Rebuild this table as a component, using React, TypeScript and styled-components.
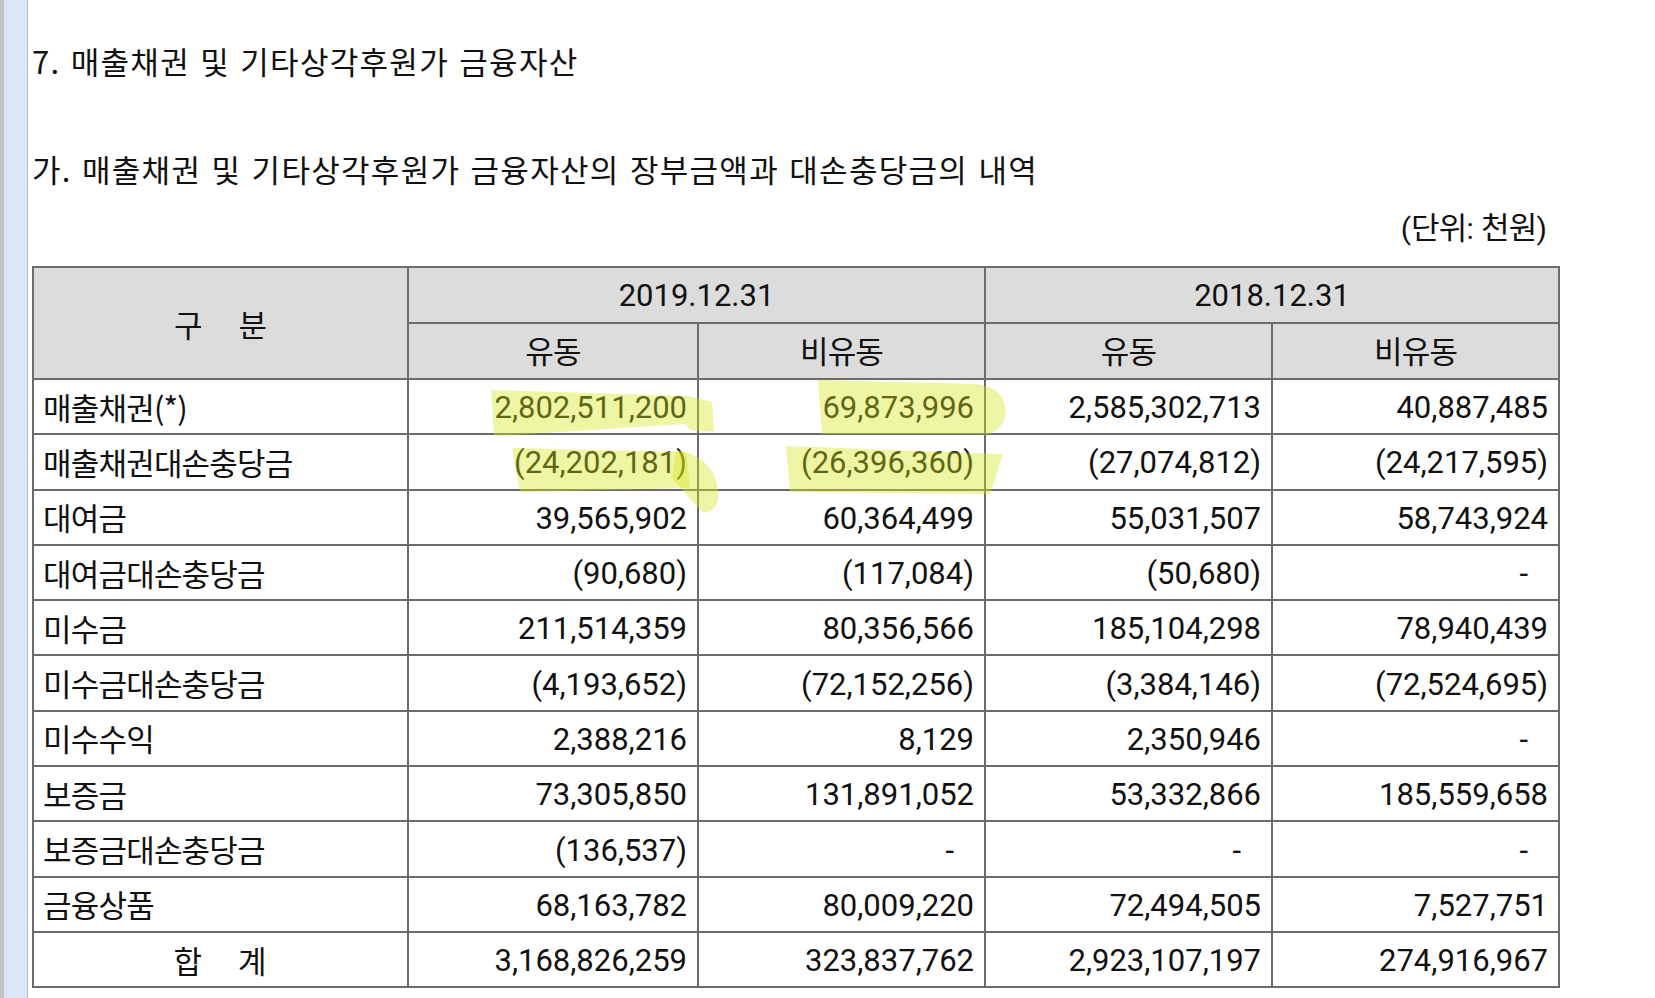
import React from "react";
import styled, { createGlobalStyle } from "styled-components";

const GlobalStyle = createGlobalStyle`
  html, body { margin: 0; padding: 0; background: #ffffff; }
  body { font-family: Roboto, "Noto Sans CJK KR", sans-serif; color: #111; }
`;

const Page = styled.div`
  position: relative;
  display: flex;
  width: 1655px;
  height: 998px;
  overflow: hidden;
  background: #fff;
`;

const Gutter = styled.div`
  flex: 0 0 auto;
  width: 23px;
  border-left: 4px solid #c3c3c3;
  border-right: 1px solid #a9bedb;
  background: #dce7f6;
`;

const Content = styled.main`
  flex: 1 1 auto;
  padding-left: 4px;
  display: flex;
  flex-direction: column;
  align-items: flex-start;
`;

const Title = styled.h1`
  margin: 41px 0 0;
  font-family: "Noto Sans CJK KR", sans-serif;
  font-weight: 400;
  font-size: 31px;
  line-height: 40px;
  letter-spacing: 1.3px;
  word-spacing: 2px;
  color: #111;
`;

const SubTitle = styled(Title).attrs({ as: "h2" })`
  margin-top: 68px;
`;

const Unit = styled.div`
  width: 1515px;
  padding-right: 11px;
  margin-top: 17px;
  text-align: right;
  font-family: Roboto, "Noto Sans CJK KR", sans-serif;
  font-size: 30px;
  line-height: 40px;
`;

const Table = styled.table`
  margin-top: 17px;
  width: 1526px;
  table-layout: fixed;
  border-collapse: collapse;
  border: 2px solid #151515;
`;

const Col = styled.col<{ $w: number }>`
  width: ${(p) => p.$w}px;
`;

const HeadRow = styled.tr`
  height: 56px;
`;

const BodyRow = styled.tr`
  height: 55.3px;
`;

const Th = styled.th<{ $sub?: boolean }>`
  background: #dcdcdc;
  border: 2px solid #6c6c6c;
  font-family: Roboto, "Noto Sans CJK KR", sans-serif;
  font-weight: 400;
  font-size: 30px;
  color: #111;
  text-align: center;
  vertical-align: middle;
  padding: 0 0 ${(p) => (p.$sub ? "3px" : "0")};
`;

const KoText = styled.span`
  font-family: "Noto Sans CJK KR", sans-serif;
  font-size: 31px;
  letter-spacing: -0.8px;
`;

const Spaced = styled.span`
  font-family: "Noto Sans CJK KR", sans-serif;
  font-size: 31px;
  letter-spacing: 36px;
  margin-right: -36px;
`;

const NumText = styled.span`
  font-family: Roboto, sans-serif;
  font-size: 31px;
`;

const Td = styled.td<{ $dash?: boolean; $align?: "left" | "right" | "center" }>`
  border: 2px solid #6c6c6c;
  padding: 3px ${(p) => (p.$dash ? "30px" : "10px")} 0 10px;
  text-align: ${(p) => p.$align || "right"};
  vertical-align: middle;
  font-size: 30px;
  line-height: 36px;
  color: #111;
  white-space: nowrap;
  overflow: hidden;
`;

const LabelTd = styled(Td)`
  padding-left: 9px;
`;

const Highlight = styled.svg`
  position: absolute;
  left: 0;
  top: 0;
  width: 1655px;
  height: 998px;
  pointer-events: none;
`;

const rows: string[][] = [
  ["매출채권(*)", "2,802,511,200", "69,873,996", "2,585,302,713", "40,887,485"],
  ["매출채권대손충당금", "(24,202,181)", "(26,396,360)", "(27,074,812)", "(24,217,595)"],
  ["대여금", "39,565,902", "60,364,499", "55,031,507", "58,743,924"],
  ["대여금대손충당금", "(90,680)", "(117,084)", "(50,680)", "-"],
  ["미수금", "211,514,359", "80,356,566", "185,104,298", "78,940,439"],
  ["미수금대손충당금", "(4,193,652)", "(72,152,256)", "(3,384,146)", "(72,524,695)"],
  ["미수수익", "2,388,216", "8,129", "2,350,946", "-"],
  ["보증금", "73,305,850", "131,891,052", "53,332,866", "185,559,658"],
  ["보증금대손충당금", "(136,537)", "-", "-", "-"],
  ["금융상품", "68,163,782", "80,009,220", "72,494,505", "7,527,751"],
];

const total = ["3,168,826,259", "323,837,762", "2,923,107,197", "274,916,967"];

const widths = [375, 290, 287, 287, 287];

export default function App() {
  return (
    <>
      <GlobalStyle />
      <Page>
        <Gutter />
        <Content>
          <Title>7. 매출채권 및 기타상각후원가 금융자산</Title>
          <SubTitle>가. 매출채권 및 기타상각후원가 금융자산의 장부금액과 대손충당금의 내역</SubTitle>
          <Unit>
            (<KoText>단위</KoText>: <KoText>천원</KoText>)
          </Unit>
          <Table>
            <colgroup>
              {widths.map((w, i) => (
                <Col key={i} $w={w} />
              ))}
            </colgroup>
            <thead>
              <HeadRow>
                <Th rowSpan={2}>
                  <Spaced>구분</Spaced>
                </Th>
                <Th colSpan={2}>
                  <NumText>2019.12.31</NumText>
                </Th>
                <Th colSpan={2}>
                  <NumText>2018.12.31</NumText>
                </Th>
              </HeadRow>
              <HeadRow>
                <Th $sub><KoText>유동</KoText></Th>
                <Th $sub><KoText>비유동</KoText></Th>
                <Th $sub><KoText>유동</KoText></Th>
                <Th $sub><KoText>비유동</KoText></Th>
              </HeadRow>
            </thead>
            <tbody>
              {rows.map((r) => (
                <BodyRow key={r[0]}>
                  <LabelTd $align="left">
                    <KoText>{r[0]}</KoText>
                  </LabelTd>
                  {r.slice(1).map((v, i) => (
                    <Td key={i} $dash={v === "-"}>
                      <NumText>{v}</NumText>
                    </Td>
                  ))}
                </BodyRow>
              ))}
              <BodyRow>
                <LabelTd $align="center">
                  <Spaced>합계</Spaced>
                </LabelTd>
                {total.map((v, i) => (
                  <Td key={i}>
                    <NumText>{v}</NumText>
                  </Td>
                ))}
              </BodyRow>
            </tbody>
          </Table>
        </Content>
        <Highlight viewBox="0 0 1655 998">
          <g fill="rgb(212,230,28)" fillOpacity="0.4" stroke="none">
            <path d="M491 390 L688 396 L712 402 L714 432 L690 430 L686 424 L494 436 Z" />
            <path d="M512 448 L686 452 L690 488 L520 492 Z" />
            <path d="M676 450 C700 454 716 468 718 490 C720 506 712 514 702 512 L672 478 Z" />
            <path d="M818 380 L975 384 C1000 386 1010 402 1004 420 C998 432 990 436 980 434 L822 434 Z" />
            <path d="M786 446 L1003 454 L990 494 L790 492 Z" />
          </g>
        </Highlight>
      </Page>
    </>
  );
}
